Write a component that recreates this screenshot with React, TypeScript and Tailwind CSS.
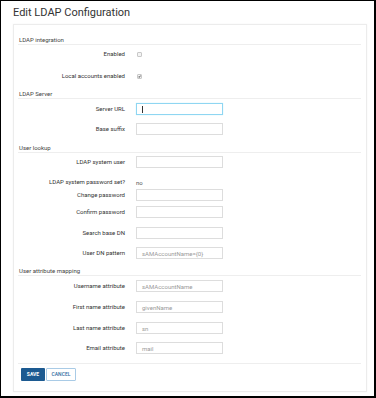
import React from "react";

const font = { fontFamily: "Roboto, 'Liberation Sans', sans-serif" };

function SectionHeader({ title, mt }: { title: string; mt: string }) {
  return (
    <div className={`${mt} h-[9px] border-b border-[#eeeeee] pl-[1px] text-[6px] leading-[8px] text-[#444]`}>
      {title}
    </div>
  );
}

function Row({
  label,
  mt,
  children,
}: {
  label: string;
  mt: string;
  children: React.ReactNode;
}) {
  return (
    <div className={`${mt} flex h-[12px] items-center`}>
      <div className="w-[107px] shrink-0 text-right text-[6px] leading-[8px] text-[#333]">
        {label}
      </div>
      <div className="ml-[11px] flex items-center">{children}</div>
    </div>
  );
}

function TextInput({
  placeholder,
  focused,
}: {
  placeholder?: string;
  focused?: boolean;
}) {
  return (
    <div
      className={`flex h-[12px] w-[87px] items-center border pl-[5px] text-[6px] text-[#9a9a9a] ${
        focused ? "border-[#8fd6f2] shadow-[0_0_1px_#bfe9f8]" : "border-[#dddddd]"
      }`}
    >
      {focused && <span className="h-[7px] w-px bg-[#333]" />}
      {placeholder}
    </div>
  );
}

function Checkbox({ checked }: { checked?: boolean }) {
  return (
    <span className="ml-[1px] flex h-[5px] w-[5px] items-center justify-center rounded-[1px] border border-[#c8c8c8] bg-[#f4f4f4]">
      {checked && (
        <svg viewBox="0 0 10 10" className="h-[5px] w-[5px]">
          <path d="M1.5 5.5 L4 8 L8.5 2" fill="none" stroke="#222" strokeWidth="2.6" />
        </svg>
      )}
    </span>
  );
}

export default function App() {
  return (
    <div
      style={font}
      className="box-border h-[398px] w-[376px] overflow-hidden border-t border-l border-r-2 border-b-2 border-black bg-white"
    >
      <div className="ml-[12px] h-[23px] pt-[5px] text-[11px] leading-[14px] text-[#333]">
        Edit LDAP Configuration
      </div>
      <div className="ml-[12px] flex h-[368px] w-[354px] flex-col border border-[#ececec] pr-[5px] pl-[4px] pt-[11px] shadow-[0_0_2px_rgba(0,0,0,0.04)]">
        <SectionHeader title="LDAP integration" mt="mt-0" />
        <Row label="Enabled" mt="mt-[3px]">
          <Checkbox />
        </Row>
        <Row label="Local accounts enabled" mt="mt-[10px]">
          <Checkbox checked />
        </Row>

        <SectionHeader title="LDAP Server" mt="mt-[8px]" />
        <Row label="Server URL" mt="mt-[4px]">
          <TextInput focused />
        </Row>
        <Row label="Base suffix" mt="mt-[8px]">
          <TextInput />
        </Row>

        <SectionHeader title="User lookup" mt="mt-[9px]" />
        <Row label="LDAP system user" mt="mt-[3px]">
          <TextInput />
        </Row>
        <Row label="LDAP system password set?" mt="mt-[8px]">
          <span className="text-[6px] text-[#555]">no</span>
        </Row>
        <Row label="Change password" mt="mt-[1px]">
          <TextInput />
        </Row>
        <Row label="Confirm password" mt="mt-[5px]">
          <TextInput />
        </Row>
        <Row label="Search base DN" mt="mt-[9px]">
          <TextInput />
        </Row>
        <Row label="User DN pattern" mt="mt-[8px]">
          <TextInput placeholder="sAMAccountName={0}" />
        </Row>

        <SectionHeader title="User attribute mapping" mt="mt-[8px]" />
        <Row label="Username attribute" mt="mt-[4px]">
          <TextInput placeholder="sAMAccountName" />
        </Row>
        <Row label="First name attribute" mt="mt-[9px]">
          <TextInput placeholder="givenName" />
        </Row>
        <Row label="Last name attribute" mt="mt-[9px]">
          <TextInput placeholder="sn" />
        </Row>
        <Row label="Email attribute" mt="mt-[8px]">
          <TextInput placeholder="mail" />
        </Row>

        <div className="mt-[9px] border-t border-[#eeeeee]" />
        <div className="mt-[4px] ml-[3px] flex gap-[1px]">
          <button className="flex h-[13px] w-[24px] items-center justify-center rounded-[1px] bg-[#1c5a91] text-[5px] font-bold text-white">
            SAVE
          </button>
          <button className="flex h-[13px] w-[30px] items-center justify-center rounded-[1px] border border-[#a9cbe6] bg-white text-[5px] font-medium text-[#2c6aa0]">
            CANCEL
          </button>
        </div>
      </div>
    </div>
  );
}
